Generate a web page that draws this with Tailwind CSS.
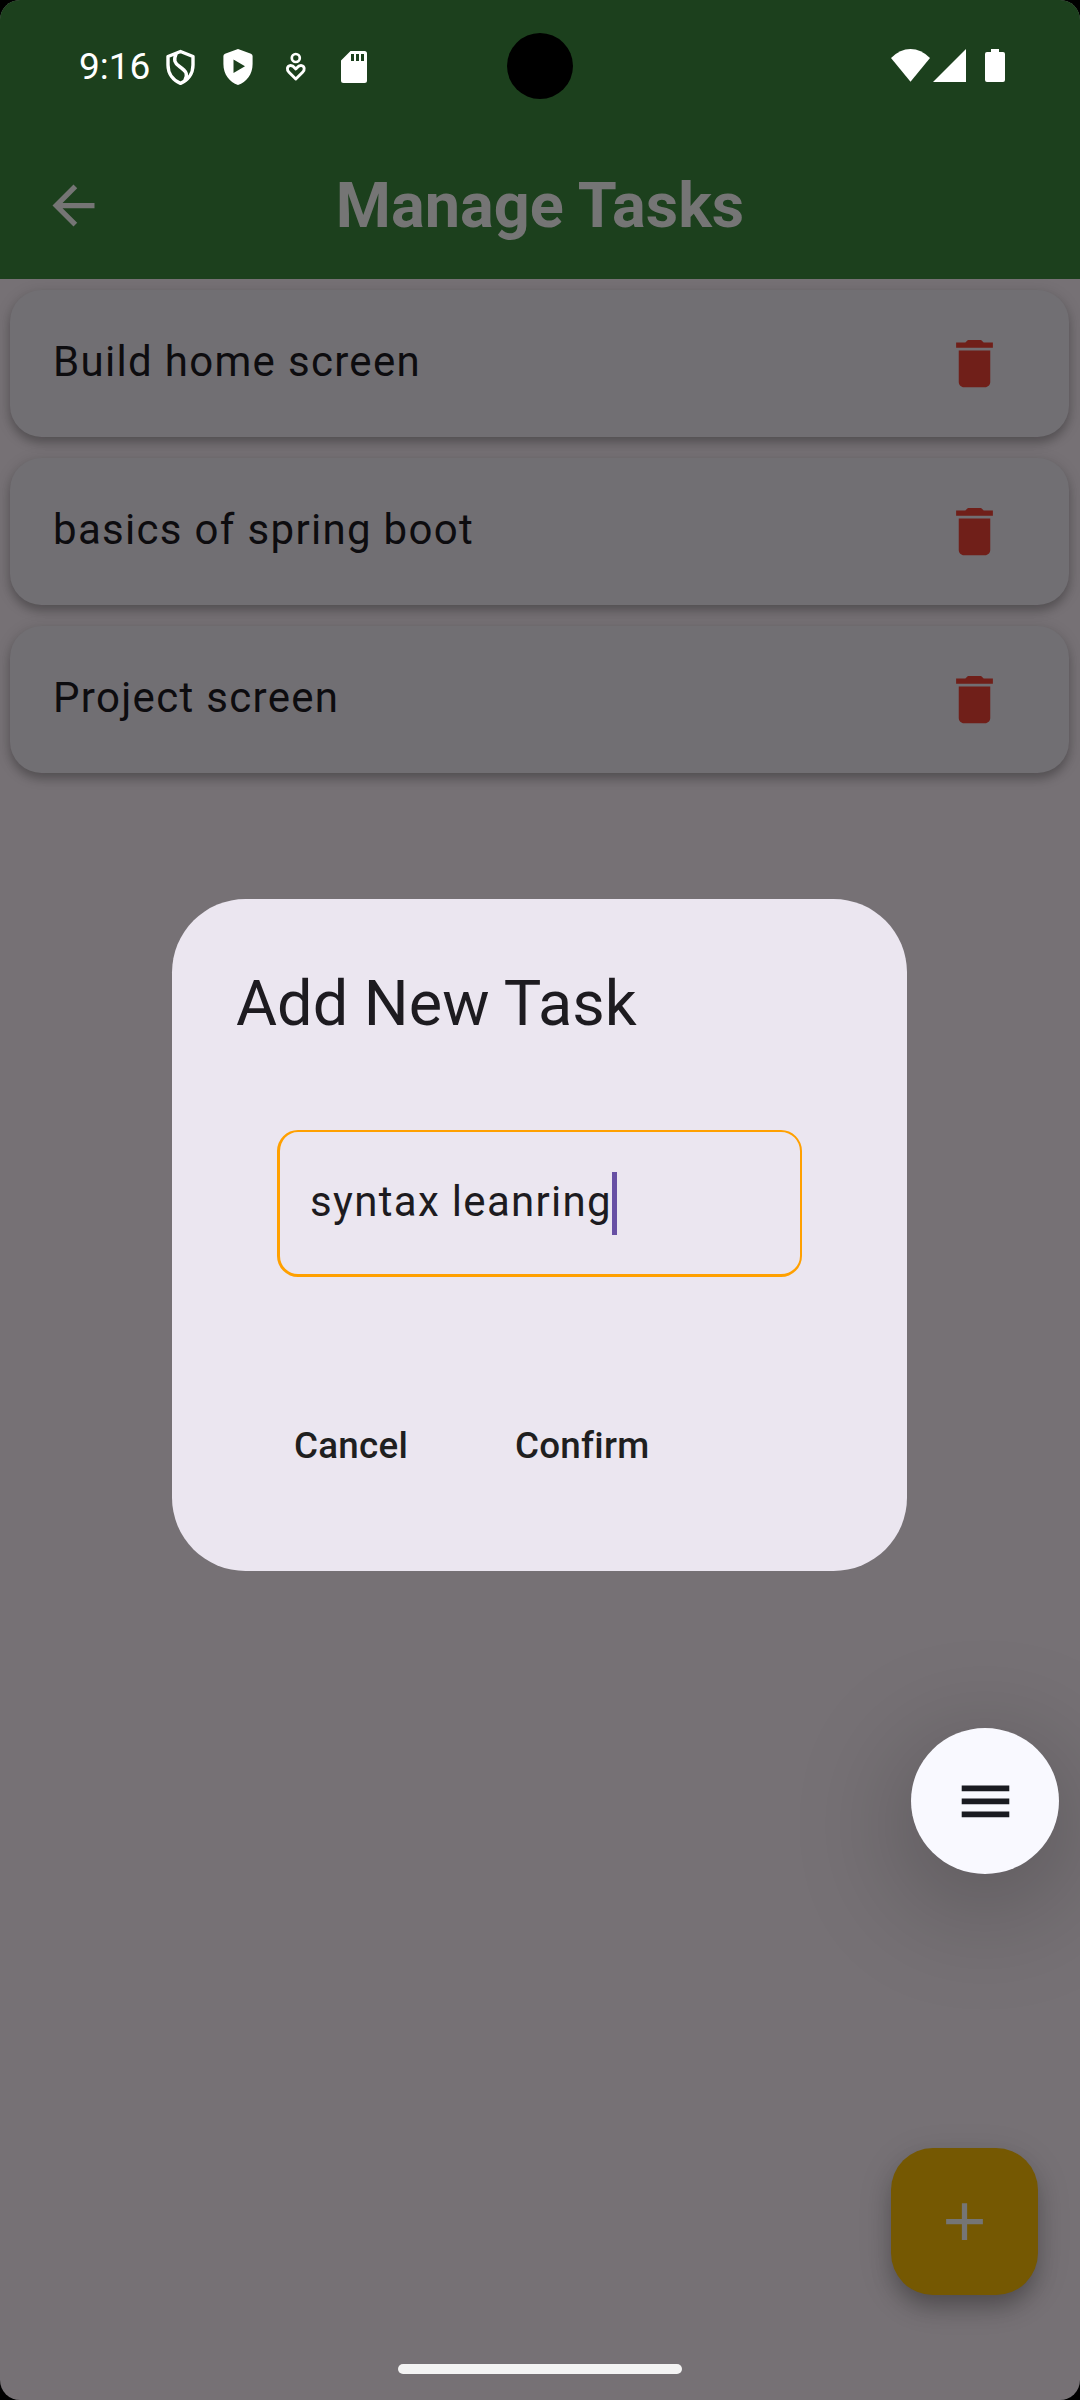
<!DOCTYPE html>
<html lang="en">
<head>
<meta charset="utf-8">
<title>Manage Tasks</title>
<script src="https://cdn.jsdelivr.net/npm/@tailwindcss/browser@4"></script>
</head>
<body class="bg-black font-['Roboto',sans-serif]">
<div class="relative w-[1080px] h-[2400px] overflow-hidden rounded-[20px] bg-[#767175] flex flex-col">

  <header class="relative z-10 h-[279px] shrink-0 bg-[#1c401d]">
    <div class="relative h-[132px] flex items-center pl-[79px] pr-[75px]">
      <span class="text-white text-[37px] leading-none w-[86px] whitespace-nowrap">9:16</span>
      <svg class="w-[173px] h-[132px] shrink-0" viewBox="165 0 173 132" fill="none">
        <g stroke="#fff" stroke-width="3.4" stroke-linejoin="round" stroke-linecap="round">
          <path d="M180.500 51.500 L193 56.500 V65 C193 74 187.500 80.500 180.500 83.300 C173.500 80.500 168 74 168 65 V56.500 Z"/>
          <path d="M176 54 C173.500 60 174.500 63 179.500 66.500 C186.500 71.500 188 74 185 80"/>
        </g>
        <path fill="#fff" fill-rule="evenodd" d="M238 49 L251 53.800 Q252.600 54.500 252.600 56 V64 C252.600 74.500 246.500 82 238 85 C229.500 82 223.400 74.500 223.400 64 V56 Q223.400 54.500 225 53.800 Z M233.500 59.500 V73 L245 66.200 Z"/>
        <circle cx="295.800" cy="58" r="4" stroke="#fff" stroke-width="2.700"/>
        <path stroke="#fff" stroke-width="2.900" stroke-linejoin="round" d="M295.800 79 L289 72.300 C286.500 69.800 287 66.300 290 65.600 C292.500 65 294 67 295.800 69 C297.600 67 299.100 65 301.600 65.600 C304.600 66.300 305.100 69.800 302.600 72.300 Z"/>
      </svg>
      <svg class="w-[30px] h-[132px] shrink-0" viewBox="338 0 30 132">
        <path fill="#fff" fill-rule="evenodd" d="M350.500 51 H364.500 Q367 51 367 53.500 V80.500 Q367 83 364.500 83 H343.500 Q341 83 341 80.500 V60.500 Z M351 54 V61 H354 V54 Z M356 54 V61 H359 V54 Z M361 54 V61 H364 V54 Z"/>
      </svg>
      <div class="absolute left-[507px] top-[33px] size-[66px] rounded-full bg-black"></div>
      <svg class="ml-auto w-[116px] h-[132px] shrink-0" viewBox="889 0 116 132" fill="#fff">
        <path d="M891 58 Q900 49 910.500 49 Q921 49 930 58 L910.500 81.700 Z"/>
        <path d="M966 49 V82 H933 Z"/>
        <path d="M991 49 H999 V52 H1003 Q1005 52 1005 54 V80 Q1005 82 1003 82 H987 Q985 82 985 80 V54 Q985 52 987 52 H991 Z"/>
      </svg>
    </div>
    <div class="relative h-[147px] flex items-center justify-center">
      <svg class="absolute left-[42px] top-[42px] size-[63px]" viewBox="0 0 24 24" fill="#757575"><path d="M20 11H7.830l5.590-5.590L12 4l-8 8 8 8 1.410-1.410L7.830 13H20v-2z"/></svg>
      <h1 class="text-[63px] leading-[74px] font-bold text-[#757575]">Manage Tasks</h1>
    </div>
  </header>

  <main class="flex flex-col gap-[21px] pl-[10px] pr-[11px] pt-[11px]">
    <div class="h-[147px] rounded-[31.500px] bg-[#716f73] shadow-[0_6px_8px_rgba(0,0,0,0.2),0_3px_16px_rgba(0,0,0,0.14)] flex items-center justify-between pl-[43px] pr-[63px]">
      <span class="text-[42px] leading-[63px] tracking-[1.3125px] text-[#0d0c0f] -mt-[4px]">Build home screen</span>
      <svg class="size-[63px]" viewBox="0 0 24 24" fill="#701f19"><path d="M6 19c0 1.100.9 2 2 2h8c1.100 0 2-.9 2-2V7H6v12zM19 4h-3.500l-1-1h-5l-1 1H5v2h14V4z"/></svg>
    </div>
    <div class="h-[147px] rounded-[31.500px] bg-[#716f73] shadow-[0_6px_8px_rgba(0,0,0,0.2),0_3px_16px_rgba(0,0,0,0.14)] flex items-center justify-between pl-[43px] pr-[63px]">
      <span class="text-[42px] leading-[63px] tracking-[1.3125px] text-[#0d0c0f] -mt-[4px]">basics of spring boot</span>
      <svg class="size-[63px]" viewBox="0 0 24 24" fill="#701f19"><path d="M6 19c0 1.100.9 2 2 2h8c1.100 0 2-.9 2-2V7H6v12zM19 4h-3.500l-1-1h-5l-1 1H5v2h14V4z"/></svg>
    </div>
    <div class="h-[147px] rounded-[31.500px] bg-[#716f73] shadow-[0_6px_8px_rgba(0,0,0,0.2),0_3px_16px_rgba(0,0,0,0.14)] flex items-center justify-between pl-[43px] pr-[63px]">
      <span class="text-[42px] leading-[63px] tracking-[1.3125px] text-[#0d0c0f] -mt-[4px]">Project screen</span>
      <svg class="size-[63px]" viewBox="0 0 24 24" fill="#701f19"><path d="M6 19c0 1.100.9 2 2 2h8c1.100 0 2-.9 2-2V7H6v12zM19 4h-3.500l-1-1h-5l-1 1H5v2h14V4z"/></svg>
    </div>
  </main>

  <!-- Dialog -->
  <section class="absolute left-[172px] top-[899px] w-[735px] h-[672px] rounded-[73.500px] bg-[#ebe6f0] pt-[63px] px-[63px]">
    <h2 class="text-[63px] leading-[84px] text-[#1d1b20] pl-px">Add New Task</h2>
    <div class="mt-[84px] ml-[42px] w-[525px] h-[147px] rounded-[21px] border-[#ffa000] border-[2px] border-b-[3px] border-l-[3px] flex items-center pl-[30px]">
      <span class="text-[42px] leading-[63px] tracking-[1.3125px] text-[#1d1b20] -mt-[3px]">syntax leanring</span>
      <span class="w-[5px] h-[63px] bg-[#6750a4]"></span>
    </div>
    <div class="mt-[116px] pl-[59px] flex text-[36.750px] leading-[105px] font-medium tracking-[0.2625px] text-[#1f1f1f]">
      <span class="w-[221px]">Cancel</span>
      <span>Confirm</span>
    </div>
  </section>

  <!-- Floating menu bubble -->
  <div class="absolute left-[911px] top-[1728px] w-[148px] h-[146px] rounded-[50%] bg-[#f9f9ff] shadow-[0_24px_110px_12px_rgba(0,0,0,0.22)] flex items-center justify-center">
    <svg class="w-[148px] h-[146px]" viewBox="911 1728 148 146" fill="#1a1b21"><path d="M961.700 1785.600h47.600v5.600h-47.600zM961.700 1798.600h47.600v5.600h-47.600zM961.700 1811.600h47.600v5.600h-47.600z"/></svg>
  </div>

  <!-- Add button -->
  <div class="absolute left-[891px] top-[2148px] size-[147px] rounded-[42px] bg-[#755802] shadow-[0_14px_22px_-3px_rgba(0,0,0,0.26),0_8px_36px_rgba(0,0,0,0.12)] flex items-center justify-center">
    <svg class="size-[63px]" viewBox="0 0 24 24" fill="#757575"><path d="M19 13h-6v6h-2v-6H5v-2h6V5h2v6h6v2z"/></svg>
  </div>

  <div class="absolute left-[398px] top-[2364px] w-[284px] h-[10px] rounded-full bg-[#f3f3f3]"></div>
</div>
</body>
</html>
